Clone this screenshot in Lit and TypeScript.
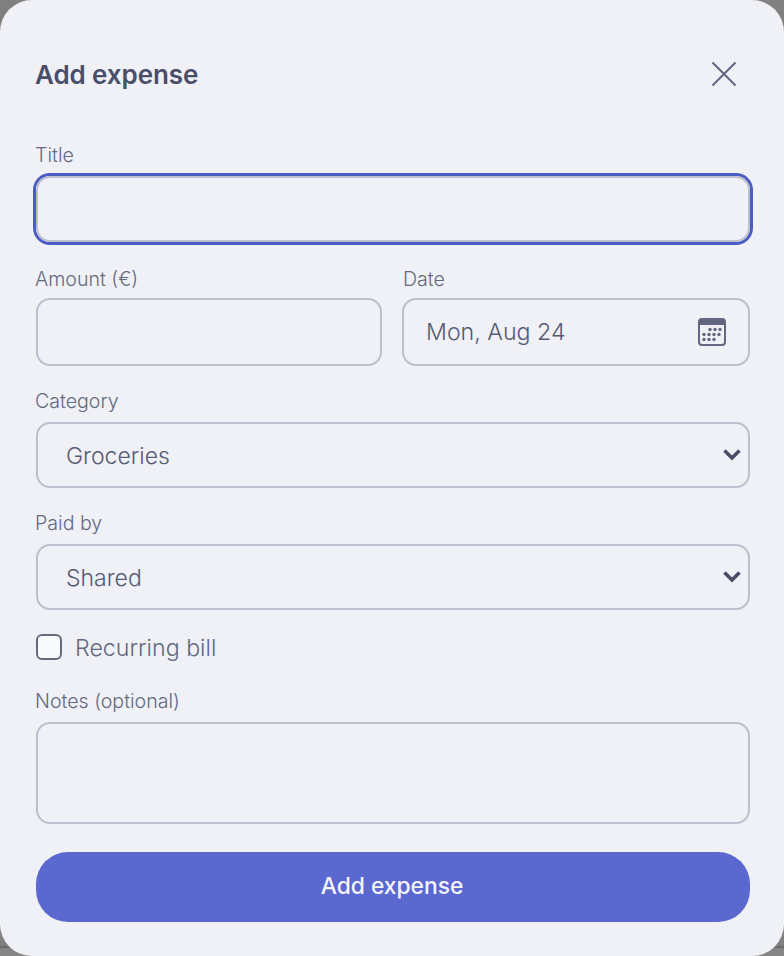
import { LitElement, html, css } from "lit";
import { customElement } from "lit/decorators.js";

const chevron = html`<svg class="chev" width="20" height="14" viewBox="0 0 20 14" aria-hidden="true"><path d="M2.5 3.5 10 11 17.5 3.5" fill="none" stroke="#4a4e69" stroke-width="3.6"/></svg>`;

@customElement("app-root")
export class AppRoot extends LitElement {
  static styles = css`
    :host {
      display: block;
      width: 784px;
      height: 956px;
      background: linear-gradient(#808080 0 946px, #6c6c6c 946px 948px, #858585 948px);
      font-family: "Inter", "Liberation Sans", sans-serif;
      color: #4a4e69;
    }
    * { box-sizing: border-box; }
    .card {
      width: 784px;
      height: 956px;
      background: #eff1f6;
      border-radius: 32px;
      padding: 54px 34px 34px 36px;
      display: flex;
      flex-direction: column;
    }
    .head {
      display: flex;
      justify-content: space-between;
      align-items: center;
      height: 42px;
      margin-bottom: 49px;
      margin-top: -1px;
    }
    h2 {
      margin: 0;
      font-size: 26px;
      font-weight: 600;
      letter-spacing: -0.1px;
      margin-left: -1px;
      color: #4a4e69;
    }
    .close {
      width: 28px;
      height: 28px;
      margin-right: 12px;
      padding: 0;
      border: 0;
      background: none;
      display: flex;
    }
    label.lbl {
      display: block;
      font-size: 19.6px;
      font-weight: 300;
      line-height: 22px;
      color: #656980;
      margin-bottom: 10px;
      margin-left: -1px;
    }
    .field { margin-bottom: 24px; position: relative; }
    .first { margin-bottom: 26px; }
    .control {
      display: block;
      width: 100%;
      height: 66px;
      background: transparent;
      border: 2px solid #bcbfce;
      border-radius: 14px;
      font: inherit;
      font-size: 23.2px;
      font-weight: 300;
      color: #575a74;
      padding: 0 28px;
      outline: none;
      appearance: none;
    }
    select.control {
      font-size: 23px;
      padding-top: 2px;
    }
    .focused {
      box-shadow: 0 0 0 3px #4b5bc4;
    }
    .row {
      display: grid;
      grid-template-columns: 346px 1fr;
      gap: 20px;
    }
    .row .lbl { margin-bottom: 8px; }
    .row .dlbl { margin-left: 1px; }
    .tall { height: 68px; }
    .date { padding: 0 22px; }
    .cal { position: absolute; right: 24px; bottom: 20px; }
    .chev { position: absolute; right: 8px; bottom: 27px; }
    .check {
      display: flex;
      align-items: center;
      gap: 13px;
      height: 28px;
      margin-bottom: 28px;
      font-size: 23.2px;
      font-weight: 300;
      color: #656980;
    }
    .box {
      width: 26px;
      height: 26px;
      border: 2px solid #656980;
      border-radius: 6px;
      background: #f9fafc;
      appearance: none;
      margin: -2px 0 0;
    }
    textarea.control { height: 102px; resize: none; }
    .notes { margin-bottom: 28px; }
    .submit {
      height: 70px;
      border: 0;
      border-radius: 32px;
      background: #5b68cf;
      color: #f4f5fb;
      font: inherit;
      font-size: 22.8px;
      font-weight: 500;
      padding: 0 2px 3px 0;
    }
  `;

  render() {
    return html`
      <div class="card">
        <div class="head">
          <h2>Add expense</h2>
          <button class="close" aria-label="Close">
            <svg width="28" height="28" viewBox="0 0 28 28"><path d="M2.5 2.5 25.5 25.5M25.5 2.5 2.5 25.5" stroke="#62667f" stroke-width="2" fill="none"/></svg>
          </button>
        </div>
        <div class="field first">
          <label class="lbl">Title</label>
          <input class="control focused" type="text" />
        </div>
        <div class="row">
          <div class="field">
            <label class="lbl">Amount (€)</label>
            <input class="control tall" type="text" />
          </div>
          <div class="field">
            <label class="lbl dlbl">Date</label>
            <input class="control tall date" type="text" value="Mon, Aug 24" />
            <svg class="cal" width="28" height="28" viewBox="0 0 28 28" aria-hidden="true">
              <rect x="1" y="1" width="26" height="26" rx="3" fill="none" stroke="#62667f" stroke-width="2"/>
              <path d="M1 4a3 3 0 0 1 3-3h20a3 3 0 0 1 3 3v3H1z" fill="#62667f"/>
              <g fill="#62667f">
                <circle cx="12" cy="11.5" r="1.7"/><circle cx="17" cy="11.5" r="1.7"/><circle cx="22" cy="11.5" r="1.7"/>
                <circle cx="6" cy="16.5" r="1.7"/><circle cx="11" cy="16.5" r="1.7"/><circle cx="16" cy="16.5" r="1.7"/><circle cx="21" cy="16.5" r="1.7"/>
                <circle cx="6" cy="21.5" r="1.7"/><circle cx="11" cy="21.5" r="1.7"/><circle cx="16" cy="21.5" r="1.7"/>
              </g>
            </svg>
          </div>
        </div>
        <div class="field">
          <label class="lbl">Category</label>
          <select class="control"><option>Groceries</option></select>
          ${chevron}
        </div>
        <div class="field">
          <label class="lbl">Paid by</label>
          <select class="control"><option>Shared</option></select>
          ${chevron}
        </div>
        <label class="check"><input class="box" type="checkbox" />Recurring bill</label>
        <div class="field notes">
          <label class="lbl">Notes (optional)</label>
          <textarea class="control"></textarea>
        </div>
        <button class="submit">Add expense</button>
      </div>
    `;
  }
}
